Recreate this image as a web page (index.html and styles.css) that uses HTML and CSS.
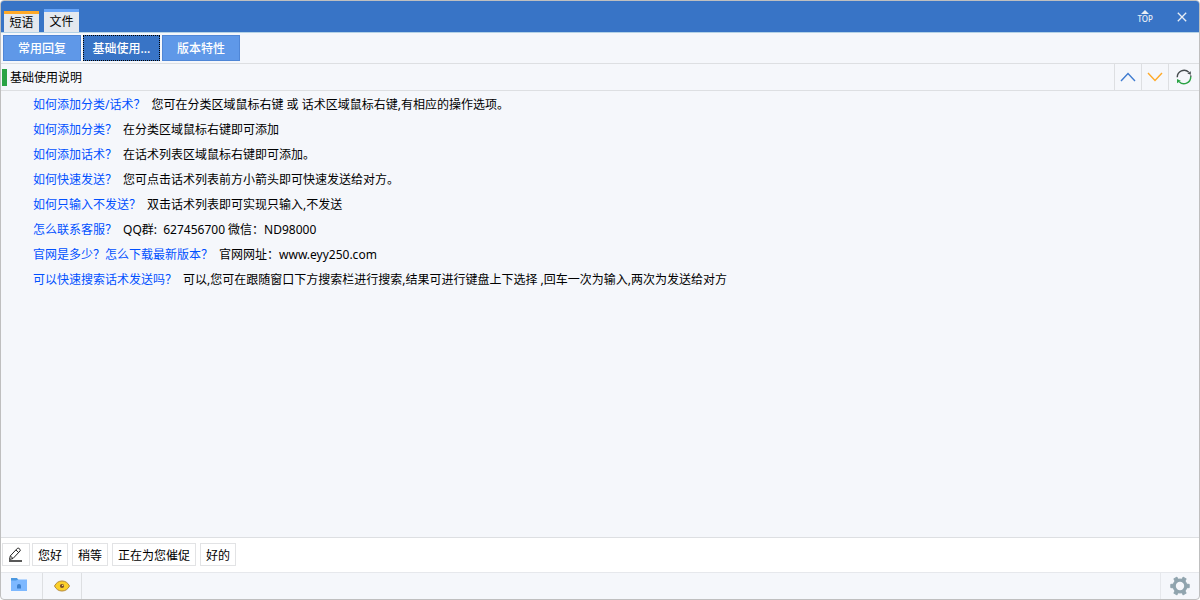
FILE: index.html
```
<!DOCTYPE html>
<html lang="zh-CN">
<head>
  <meta charset="UTF-8">
  <meta name="viewport" content="width=device-width, initial-scale=1.0">
  <title>短语</title>
  <link rel="stylesheet" href="styles.css">
</head>
<body>
  <div class="window">
    <header class="titlebar">
      <div class="tabs">
        <button class="tab active">短语</button>
        <button class="tab">文件</button>
      </div>
      <div class="window-btns">
        <button class="top-btn" aria-label="置顶">
          <svg width="8" height="4" viewBox="0 0 8 4"><path d="M4 0l4 4H0z" fill="#e8eef5"/></svg>
          <span>TOP</span>
        </button>
        <button class="close-btn" aria-label="关闭">
          <svg width="10" height="10" viewBox="0 0 10 10"><path d="M.8.8l8.4 8.4M9.2.8L.8 9.2" stroke="#e8eef5" stroke-width="1.3"/></svg>
        </button>
      </div>
    </header>

    <nav class="categories">
      <button class="category">常用回复</button>
      <button class="category active">基础使用...</button>
      <button class="category">版本特性</button>
    </nav>

    <div class="section-head">
      <h1>基础使用说明</h1>
      <div class="tools">
        <button class="tool" aria-label="上一个">
          <svg width="16" height="10" viewBox="0 0 16 10"><path d="M1 9l7-7.5L15 9" fill="none" stroke="#3f7bd0" stroke-width="1.4"/></svg>
        </button>
        <button class="tool" aria-label="下一个">
          <svg width="16" height="10" viewBox="0 0 16 10"><path d="M1 1l7 7.5L15 1" fill="none" stroke="#ffaa28" stroke-width="1.4"/></svg>
        </button>
        <button class="tool refresh" aria-label="刷新">
          <svg width="16" height="16" viewBox="0 0 16 16" fill="none" stroke-width="1.4">
            <path d="M1.3 8.2A6.7 6.7 0 0 1 12.8 3.3M14.6 6.4q.2.8.1 1.4" stroke="#454b4e"/>
            <path d="M14.8 2.2v3.6l-3.4-1.4z" fill="#454b4e"/>
            <path d="M14.7 7.8A6.7 6.7 0 0 1 3.2 12.7" stroke="#2aa345"/>
            <path d="M1 14.2V10l3.8 1.8z" fill="#2aa345"/>
          </svg>
        </button>
      </div>
    </div>

    <ul class="phrases">
      <li><b>如何添加分类/话术？</b><span>您可在分类区域鼠标右键 或 话术区域鼠标右键,有相应的操作选项。</span></li>
      <li><b>如何添加分类？</b><span>在分类区域鼠标右键即可添加</span></li>
      <li><b>如何添加话术？</b><span>在话术列表区域鼠标右键即可添加。</span></li>
      <li><b>如何快速发送？</b><span>您可点击话术列表前方小箭头即可快速发送给对方。</span></li>
      <li><b>如何只输入不发送？</b><span>双击话术列表即可实现只输入,不发送</span></li>
      <li><b>怎么联系客服？</b><span>QQ群:&nbsp; 627456700 微信：ND98000</span></li>
      <li><b>官网是多少？怎么下载最新版本？</b><span>官网网址：www.eyy250.com</span></li>
      <li><b>可以快速搜索话术发送吗？</b><span>可以,您可在跟随窗口下方搜索栏进行搜索,结果可进行键盘上下选择 ,回车一次为输入,两次为发送给对方</span></li>
    </ul>

    <div class="quick-bar">
      <button class="quick edit" aria-label="编辑">
        <svg width="15" height="15" viewBox="0 0 15 15" fill="none" stroke="#222"><path d="M1.5 12.5l.8-3.6 7-7.5q.8-.6 1.6 0l1.1 1q.8.8 0 1.6l-7 7.5zM8 3l2.8 2.7M2.3 8.9l2.7 2.6"/><path d="M1 14h13" stroke-width="1.3"/></svg>
      </button>
      <button class="quick">您好</button>
      <button class="quick">稍等</button>
      <button class="quick">正在为您催促</button>
      <button class="quick">好的</button>
    </div>

    <footer class="status-bar">
      <button class="status-btn folder" aria-label="文件夹">
        <svg width="16" height="14" viewBox="0 0 16 14"><path d="M0 0h6l1.5 2H16v5H0z" fill="#4b98e0"/><path d="M0 2.5h5L7 1.6h9V13H0z" fill="#7db8ff"/><path d="M6 10.5V8q0-2 2-2t2 2v2.5z" fill="#3c7fcc"/></svg>
      </button>
      <button class="status-btn eye" aria-label="显示">
        <svg width="16" height="12" viewBox="0 0 16 12"><path d="M.5 6Q3 1 8 1t7.5 5Q13 11 8 11T.5 6z" fill="#fbd02a" stroke="#b58a3c"/><circle cx="8" cy="6" r="2.1" fill="#7a4d2a"/><circle cx="8.6" cy="5.4" r=".7" fill="#f7dc80"/></svg>
      </button>
      <button class="status-btn settings" aria-label="设置">
        <svg width="20" height="20" viewBox="0 0 20 20">
          <g fill="#90a4ae" stroke="#90a4ae" stroke-linejoin="round">
            <circle cx="10" cy="10" r="7"/>
            <path d="M.8 8.3h18.4v3.4H.8z"/>
            <path d="M.8 8.3h18.4v3.4H.8z" transform="rotate(60 10 10)"/>
            <path d="M.8 8.3h18.4v3.4H.8z" transform="rotate(120 10 10)"/>
          </g>
          <circle cx="10" cy="10" r="4.2" fill="#f5f7fb"/>
        </svg>
      </button>
    </footer>
  </div>
</body>
</html>
```
FILE: styles.css
```
* {
  box-sizing: border-box;
}
body {
  margin: 0;
  background-color: #fff;
  color: #000;
  font-family: "Noto Sans", "Noto Sans CJK SC", sans-serif;
  font-size: 12px;
}
button {
  font: inherit;
  color: inherit;
  margin: 0;
  padding: 0;
  border: none;
  background: none;
  cursor: pointer;
}
svg {
  display: block;
}
.window {
  display: flex;
  flex-direction: column;
  min-height: 100vh;
  border: 1px solid #bfbfbf;
  border-radius: 4px;
  background-color: #f5f7fb;
  overflow: hidden;
}
.titlebar {
  display: flex;
  justify-content: space-between;
  height: 32px;
  background-color: #3874c6;
  border-bottom: 1px solid #b4d2e6;
}
.tabs {
  display: flex;
  align-items: flex-end;
  gap: 5px;
  padding-left: 3px;
}
.tab {
  width: 35px;
  height: 23px;
  padding-bottom: 1px;
  background-color: #e4e8ee;
  border-top: 3px solid #67a4f8;
  line-height: 18px;
}
.tab.active {
  height: 21px;
  border-top-color: #ffa928;
}
.window-btns {
  display: flex;
  align-items: center;
  gap: 24px;
  padding-right: 12px;
}
.top-btn {
  display: flex;
  flex-direction: column;
  align-items: center;
  gap: 1px;
  color: #e8eef5;
  font-size: 8px;
  font-weight: 500;
  line-height: 8px;
}
.categories {
  display: flex;
  gap: 2px;
  height: 31px;
  padding: 2px;
  border-bottom: 1px solid #dddfe2;
}
.category {
  width: 78px;
  height: 26px;
  background-color: #5f98e8;
  border: 1px solid #4f86d6;
  color: #fff;
  font-weight: 500;
}
.category.active {
  width: 77px;
  background-color: #3874c6;
  border: 1px dotted #000;
}
.section-head {
  display: flex;
  justify-content: space-between;
  height: 27px;
  border-bottom: 1px solid #dddfe2;
}
.section-head h1 {
  align-self: center;
  margin: 0 0 0 1px;
  padding-left: 3px;
  border-left: 5px solid #2aa345;
  font-size: 12px;
  font-weight: normal;
  line-height: 17px;
}
.tools {
  display: flex;
}
.tool {
  display: flex;
  align-items: center;
  justify-content: center;
  width: 27px;
  border-left: 1px solid #dddfe2;
}
.tool.refresh {
  width: 31px;
}
.phrases {
  flex: 1;
  margin: 0;
  padding: 1px 0 0 32px;
  list-style: none;
}
.phrases li {
  display: flex;
  gap: 6px;
  line-height: 25px;
}
.phrases b {
  color: #0050ff;
  font-weight: normal;
}
.quick-bar {
  display: flex;
  align-items: flex-start;
  gap: 4px;
  height: 35px;
  padding: 5px 0 0 1px;
  background-color: #fff;
  border-top: 1px solid #dddfe2;
}
.quick {
  height: 23px;
  padding: 0 5px;
  background-color: #fff;
  border: 1px solid #e2e3e5;
}
.quick.edit {
  width: 28px;
  margin-right: -2px;
}
.status-bar {
  display: flex;
  height: 27px;
  border-top: 1px solid #e6e8ec;
}
.status-btn {
  display: flex;
  align-items: center;
  justify-content: center;
  width: 39px;
  border-right: 1px solid #dddfe2;
}
.status-btn.folder {
  width: 42px;
  padding: 0 6px 2px 0;
}
.status-btn.settings {
  margin-left: auto;
  border-right: none;
  border-left: 1px solid #e6e8ec;
}
```
